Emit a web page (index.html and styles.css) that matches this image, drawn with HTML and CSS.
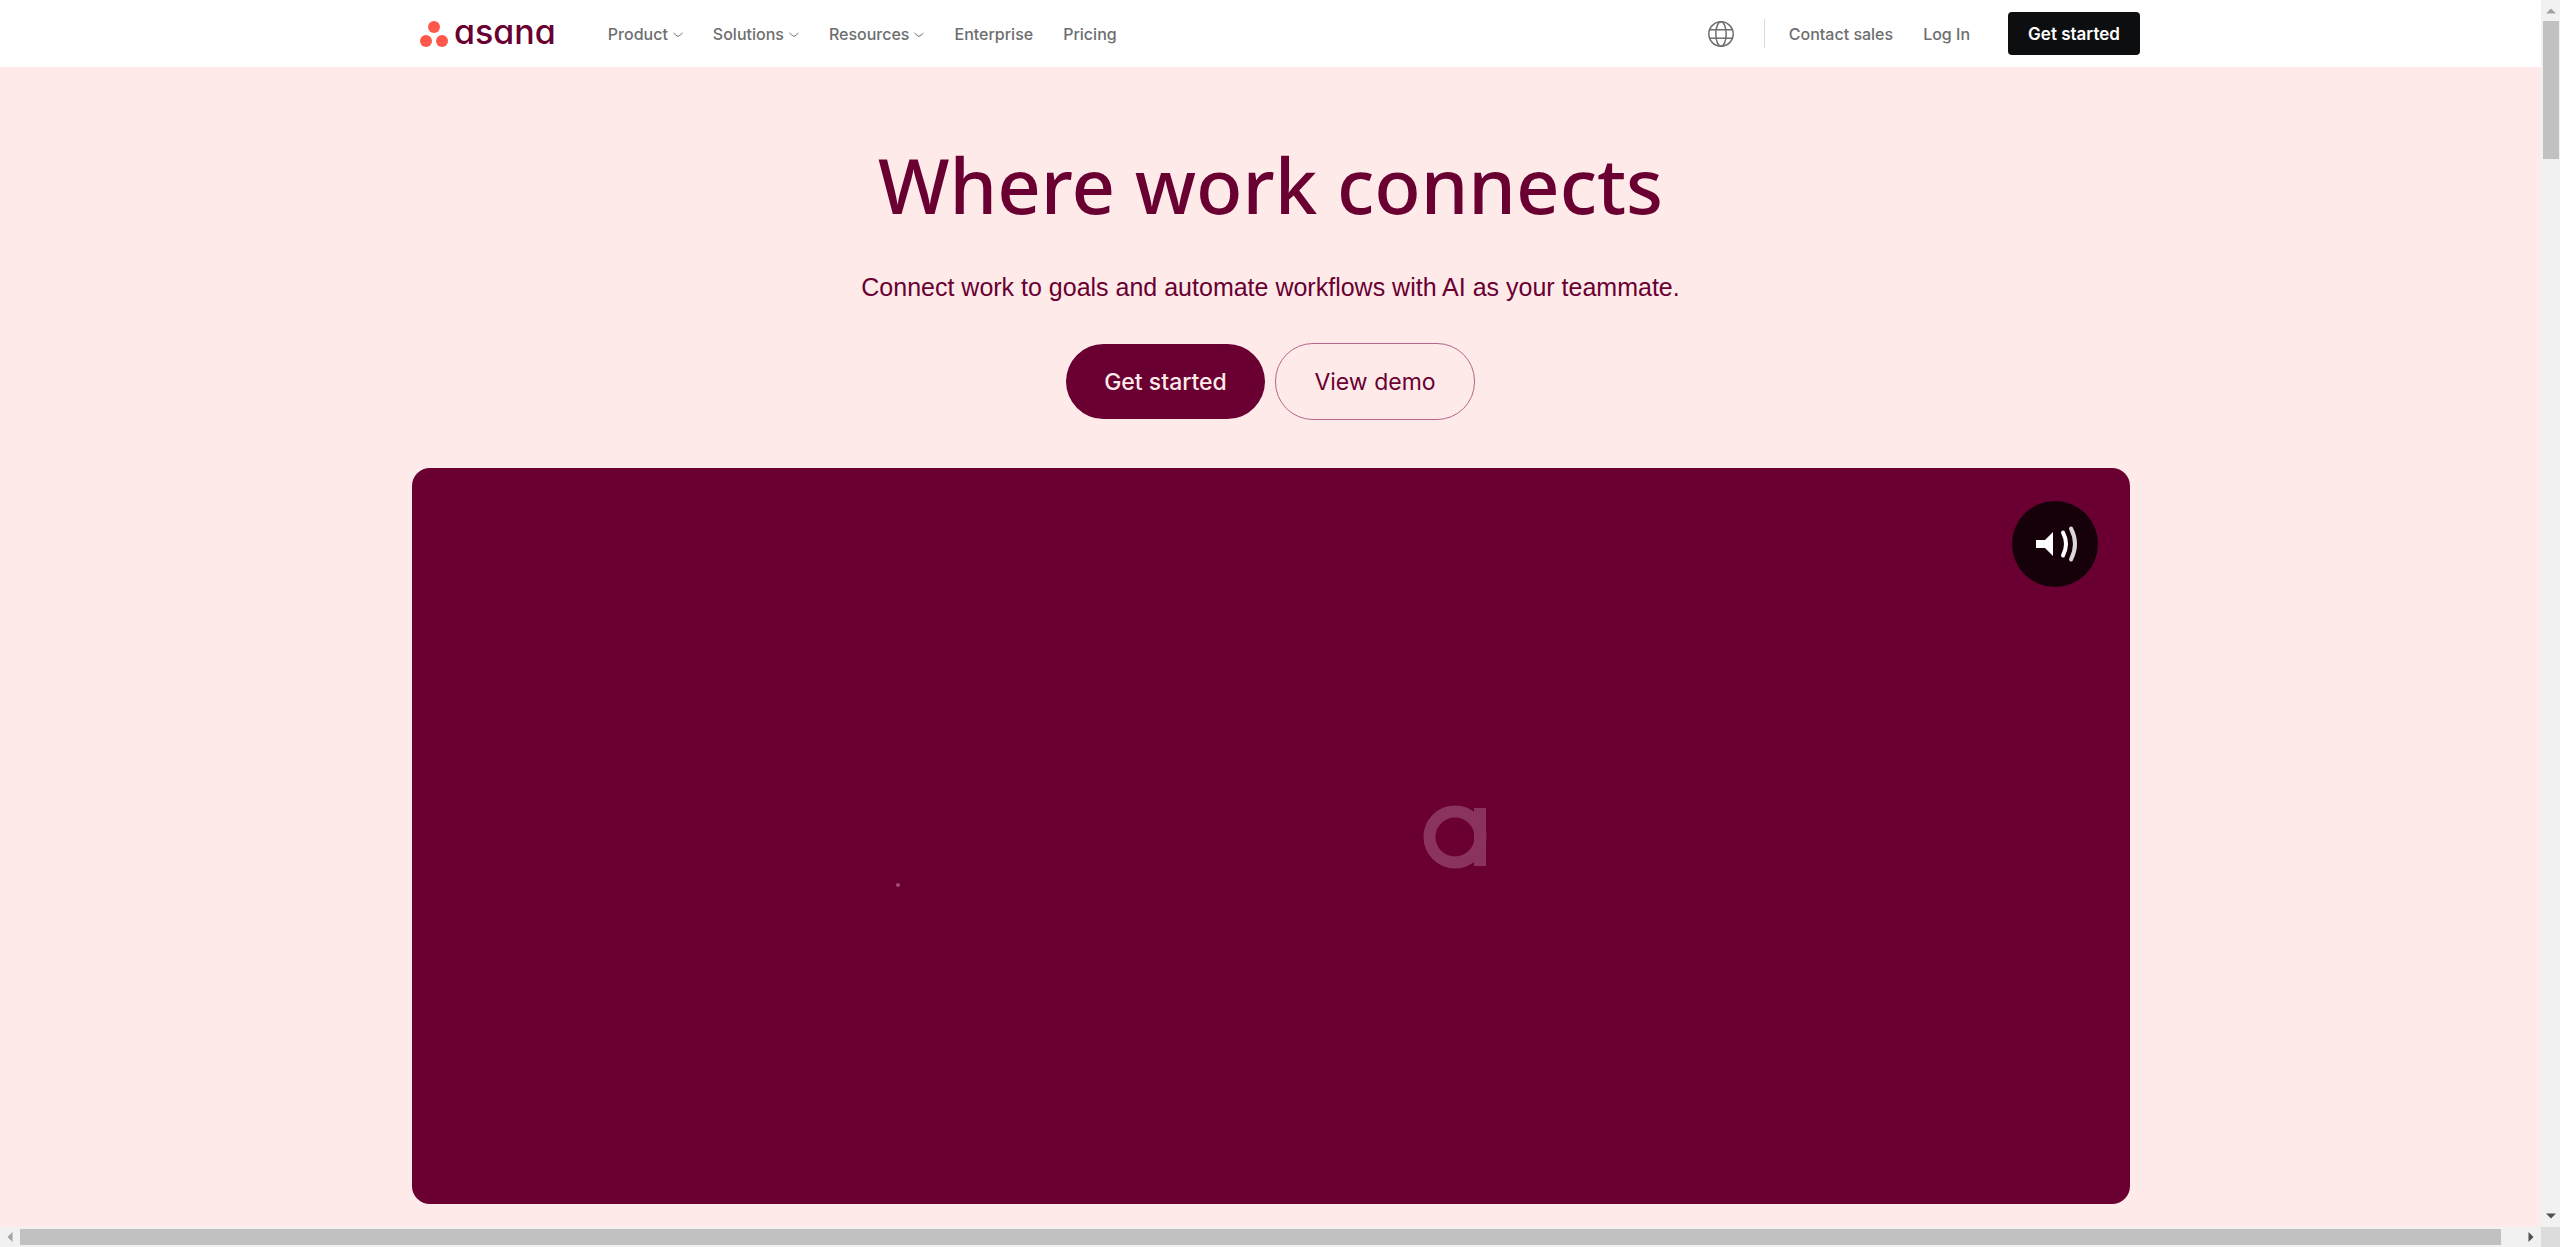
FILE: index.html
```html
<!DOCTYPE html>
<html lang="en">
<head>
<meta charset="utf-8">
<meta name="viewport" content="width=device-width, initial-scale=1">
<title>Asana</title>
<link rel="stylesheet" href="styles.css">
</head>
<body>
<div class="window">
  <div class="page">
    <header class="header">
      <div class="header-inner">
        <a class="logo" href="#">
          <svg class="logo-mark" viewBox="0 0 28 26" aria-hidden="true">
            <circle cx="14" cy="6" r="6"/><circle cx="6" cy="20" r="6"/><circle cx="22" cy="20" r="6"/>
          </svg>
          <span class="logo-word">asana</span>
        </a>
        <nav class="nav">
          <a class="nav-link" href="#">Product <svg class="chevron" viewBox="0 0 10 6" aria-hidden="true"><path d="M.5 1 Q2 2.500 5 4.500 Q8 2.500 9.500 1"/></svg></a>
          <a class="nav-link" href="#">Solutions <svg class="chevron" viewBox="0 0 10 6" aria-hidden="true"><path d="M.5 1 Q2 2.500 5 4.500 Q8 2.500 9.500 1"/></svg></a>
          <a class="nav-link" href="#">Resources <svg class="chevron" viewBox="0 0 10 6" aria-hidden="true"><path d="M.5 1 Q2 2.500 5 4.500 Q8 2.500 9.500 1"/></svg></a>
          <a class="nav-link" href="#">Enterprise</a>
          <a class="nav-link" href="#">Pricing</a>
        </nav>
        <div class="tools">
          <button class="globe" type="button" aria-label="Language">
            <svg viewBox="0 0 26 26" aria-hidden="true">
              <circle cx="13" cy="13" r="12.2"/><ellipse cx="13" cy="13" rx="5.200" ry="12.2"/><path d="M2 8.800H24M2 17.200H24"/>
            </svg>
          </button>
          <span class="divider"></span>
          <a class="nav-link" href="#">Contact sales</a>
          <a class="nav-link" href="#">Log In</a>
          <button class="start" type="button">Get started</button>
        </div>
      </div>
    </header>
    <main class="hero">
      <h1 class="title">Where work connects</h1>
      <p class="subtitle">Connect work to goals and automate workflows with AI as your teammate.</p>
      <div class="actions">
        <button class="pill pill-solid" type="button">Get started</button>
        <button class="pill pill-outline" type="button">View demo</button>
      </div>
      <section class="video" aria-label="Video">
        <svg class="frame" viewBox="0 0 1718 736" aria-hidden="true">
          <g class="mark"><circle cx="1043" cy="369" r="25.500"/><path d="M1068 340V398"/></g>
          <circle class="speck" cx="486" cy="417" r="2"/>
        </svg>
        <button class="sound" type="button" aria-label="Sound">
          <svg viewBox="0 0 86 86" aria-hidden="true">
            <path class="speaker" d="M24 39H33L41 31V55L33 47H24Z"/>
            <path class="wave" d="M51 31.500Q57 43 51 54.500"/><path class="wave wave-far" d="M59 27.500Q67 43 59 58.500"/>
          </svg>
        </button>
      </section>
    </main>
  </div>
  <div class="bar bar-v" aria-hidden="true">
    <svg class="arrow arrow-off" viewBox="0 0 10 6"><path d="M0 5.500L5 .5L10 5.500Z"/></svg>
    <span class="track"><span class="thumb thumb-v"></span></span>
    <svg class="arrow" viewBox="0 0 10 6"><path d="M0 .5L5 5.500L10 .5Z"/></svg>
  </div>
  <div class="bar bar-h" aria-hidden="true">
    <svg class="arrow-side arrow-off" viewBox="0 0 6 10"><path d="M5.500 0L.5 5L5.500 10Z"/></svg>
    <span class="track"><span class="thumb thumb-h"></span></span>
    <svg class="arrow-side" viewBox="0 0 6 10"><path d="M.5 0L5.500 5L.5 10Z"/></svg>
  </div>
  <div class="corner"></div>
</div>
</body>
</html>
```
FILE: styles.css
```css
* { box-sizing: border-box; }

body {
  margin: 0;
  font-family: Inter, "Liberation Sans", sans-serif;
  font-size: 16px;
  color: #690031;
}

button { font: inherit; border: 0; padding: 0; cursor: pointer; }
a { color: inherit; text-decoration: none; }
svg { display: block; }

.window {
  display: grid;
  grid-template-columns: minmax(0, 1fr) 19px;
  grid-template-rows: minmax(0, 1fr) 20px;
  height: 100vh;
}

.page { overflow: hidden; background: #ffeaea; }

/* header spans the full window, running under the scrollbar */
.header { width: 100vw; background: #fff; }

.header-inner {
  display: flex;
  align-items: center;
  max-width: 1720px;
  height: 67px;
  margin: 0 auto;
}

.logo { display: flex; align-items: center; gap: 6px; margin-right: 52px; }
.logo-mark { width: 28px; height: 26px; fill: #ff584a; }
.logo-word {
  font-size: 34px;
  line-height: 40px;
  font-weight: 500;
  font-feature-settings: "cv11";
  padding-bottom: 4px;
}

.nav, .tools { display: flex; align-items: center; gap: 30px; }
.nav-link {
  display: flex;
  align-items: center;
  gap: 5px;
  font-weight: 500;
  line-height: 24px;
  color: #6d6e6f;
}
.chevron { width: 10px; height: 6px; fill: none; stroke: #6d6e6f; margin-top: 3px; }

.tools { margin-left: auto; }
.globe { background: none; width: 26px; height: 26px; }
.globe svg { fill: none; stroke: #6d6e6f; stroke-width: 1.5; }
.divider { width: 1px; height: 29px; margin-right: -6px; background: #d5dfdf; }
.start {
  width: 132px;
  height: 43px;
  margin-left: 8px;
  border-radius: 4px;
  background: #0d0e10;
  color: #fff;
  font-size: 17px;
  font-weight: 600;
}

.hero { display: flex; flex-direction: column; align-items: center; padding-top: 72px; }
.title {
  margin: 0;
  font: 500 76px/92px "Noto Sans", sans-serif;
  white-space: nowrap;
}
.subtitle { margin: 40px 0 0; font: 25px/32px "Liberation Sans", sans-serif; }
.actions { display: flex; align-items: center; gap: 10px; margin-top: 40px; }
.pill { height: 75px; width: 199px; border-radius: 38px; font-size: 23px; }
.pill-solid { background: #690031; color: #ffeaea; font-weight: 500; }
.pill-outline { width: 200px; height: 77px; background: none; border: 1px solid #b4678a; color: #690031; }

.video {
  position: relative;
  width: 100%;
  max-width: 1718px;
  margin-top: 48px;
  border-radius: 18px;
  background: #690031;
}
.frame { width: 100%; }
.mark { fill: none; stroke: #8b335f; stroke-width: 12; }
.speck { fill: #a04c78; }

.sound {
  position: absolute;
  top: 33px;
  right: 32px;
  width: 86px;
  height: 86px;
  border-radius: 50%;
  background: #16000a;
}
.speaker { fill: #fff; }
.wave { fill: none; stroke: #fff; stroke-width: 4; stroke-linecap: round; }
.wave-far { stroke: #dcd8da; }

.bar { display: flex; align-items: center; background: #f1f1f1; }
.bar-v { flex-direction: column; padding: 8px 0; gap: 7px; }
.bar-h { padding: 0 7px; gap: 7px; }
.track { flex: 1; display: flex; }
.bar-v .track { width: 16px; }
.bar-h .track { height: 16px; }
.thumb { background: #c1c1c1; }
.thumb-v { width: 100%; height: calc(12% - 4px); }
.thumb-h { height: 100%; width: calc(100% - 20px); }
.arrow { width: 10px; height: 6px; fill: #505050; }
.arrow-side { width: 6px; height: 10px; fill: #505050; }
.arrow-off { fill: #a3a3a3; }
.corner { background: #dcdcdc; }
```
